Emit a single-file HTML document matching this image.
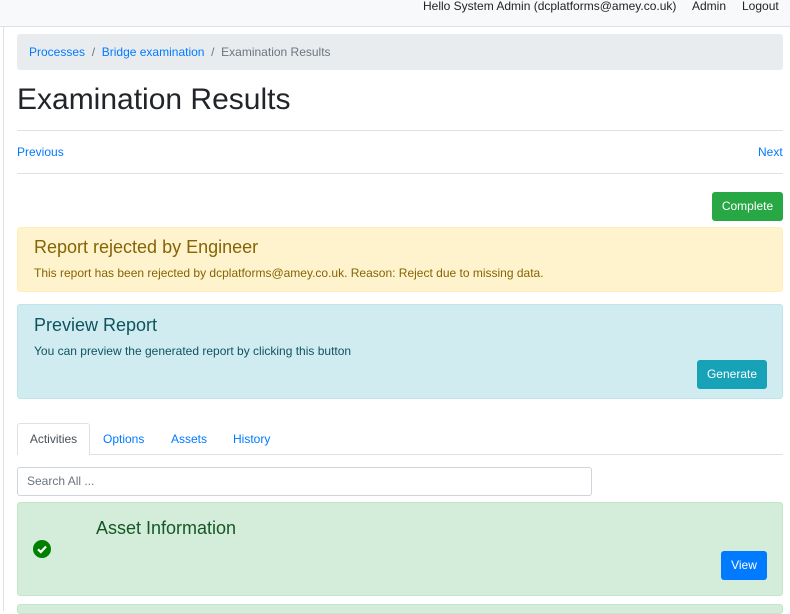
<!DOCTYPE html>
<html><head><style>
*{box-sizing:border-box;margin:0;padding:0}
body{width:790px;height:611px;overflow:hidden;background:#fff;font-family:"Liberation Sans",sans-serif;font-size:12px;color:#212529;position:relative}
.top{position:absolute;left:0;top:0;width:790px;height:27px;background:#f8f9fa;border-bottom:1px solid #dee2e6}
.top span{position:absolute;top:0;font-size:12px;color:#212529;line-height:13px}
.vl{position:absolute;left:3px;top:27px;width:1px;height:584px;background:#dee2e6}
a{color:#007bff;text-decoration:none}
.abs{position:absolute}
.bc{left:17px;top:34px;width:766px;height:36px;background:#e9ecef;border-radius:3px;padding:0 12px;line-height:36px}
.hr{left:17px;width:766px;height:1px;background:#dee2e6}
.btn{position:absolute;color:#fff;border-radius:3px;text-align:center;font-size:12px}
</style></head><body>
<div class="top">
<span style="left:423px">Hello System Admin (dcplatforms@amey.co.uk)</span>
<span style="left:692px">Admin</span>
<span style="left:742px">Logout</span>
</div>
<div class="vl"></div>
<div class="abs bc"><a>Processes</a> <span style="color:#6c757d">&nbsp;/&nbsp;</span> <a>Bridge examination</a> <span style="color:#6c757d">&nbsp;/&nbsp;</span> <span style="color:#6c757d">Examination Results</span></div>
<div class="abs" style="left:17px;top:82px;font-size:30px;line-height:36px">Examination Results</div>
<div class="abs hr" style="top:130px"></div>
<a class="abs" style="left:17px;top:145px">Previous</a>
<a class="abs" style="left:758px;top:145px">Next</a>
<div class="abs hr" style="top:173px"></div>
<div class="btn" style="left:712px;top:192px;width:71px;height:29px;line-height:29px;background:#28a745">Complete</div>
<div class="abs" style="left:17px;top:227px;width:766px;height:65px;background:#fff3cd;border:1px solid #ffeeba;border-radius:3px;color:#856404">
<div style="position:absolute;left:16px;top:9px;font-size:18px">Report rejected by Engineer</div>
<div style="position:absolute;left:16px;top:38px">This report has been rejected by dcplatforms@amey.co.uk. Reason: Reject due to missing data.</div>
</div>
<div class="abs" style="left:17px;top:304px;width:766px;height:95px;background:#d1ecf1;border:1px solid #bee5eb;border-radius:3px;color:#0c5460">
<div style="position:absolute;left:16px;top:10px;font-size:18px">Preview Report</div>
<div style="position:absolute;left:16px;top:39px">You can preview the generated report by clicking this button</div>
</div>
<div class="btn" style="left:697px;top:360px;width:70px;height:29px;line-height:29px;background:#17a2b8">Generate</div>
<div class="abs hr" style="top:454px"></div>
<div class="abs" style="left:17px;top:423px;width:73px;height:32px;background:#fff;border:1px solid #dee2e6;border-bottom:none;border-radius:3px 3px 0 0;line-height:30px;text-align:center;color:#495057">Activities</div>
<a class="abs" style="left:103px;top:432px">Options</a>
<a class="abs" style="left:171px;top:432px">Assets</a>
<a class="abs" style="left:233px;top:432px">History</a>
<div class="abs" style="left:17px;top:467px;width:575px;height:29px;border:1px solid #ced4da;border-radius:3px;padding-left:9px;line-height:27px;color:#6c757d">Search All ...</div>
<div class="abs" style="left:17px;top:502px;width:766px;height:94px;background:#d4edda;border:1px solid #c3e6cb;border-radius:3px"></div>
<div class="abs" style="left:96px;top:518px;font-size:18px;color:#155724">Asset Information</div>
<svg class="abs" style="left:33px;top:540px" width="18" height="18" viewBox="0 0 18 18"><circle cx="9" cy="9" r="9" fill="#008000"/><path d="M5 9.3l2.8 2.7L13 6.5" stroke="#fff" stroke-width="2.2" fill="none"/></svg>
<div class="btn" style="left:721px;top:551px;width:46px;height:29px;line-height:29px;background:#007bff">View</div>
<div class="abs" style="left:17px;top:604px;width:766px;height:10px;background:#d4edda;border:1px solid #c3e6cb;border-radius:3px"></div>
</body></html>
